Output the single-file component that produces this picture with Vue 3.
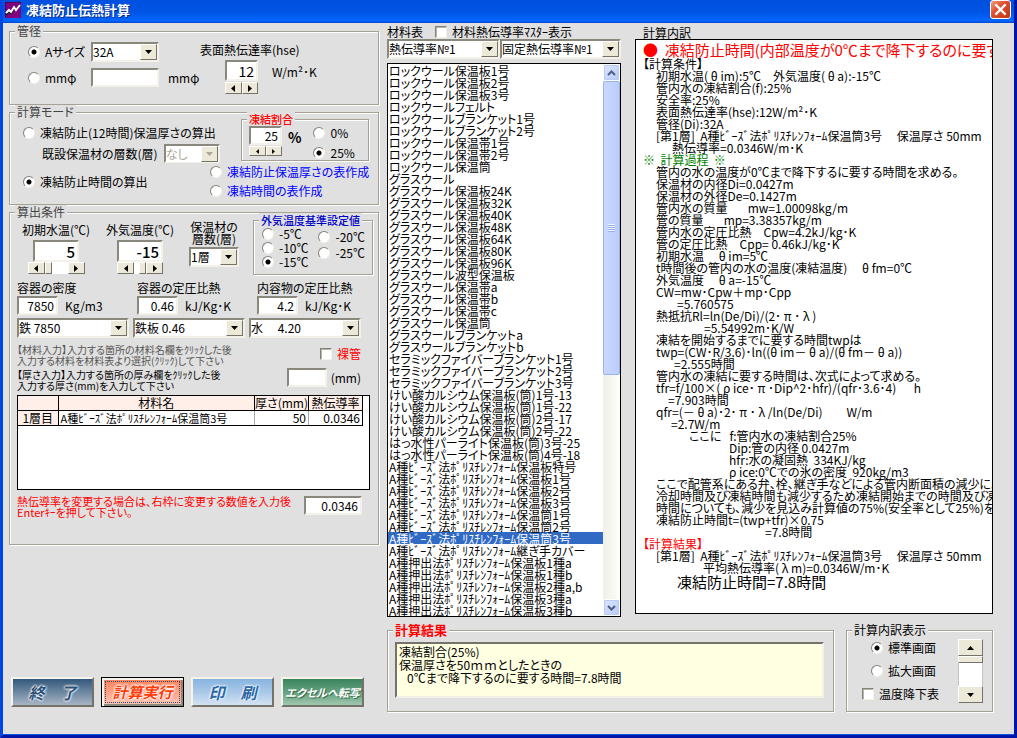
<script setup>
import { ref } from 'vue'

const pipeKind = ref('a')
const pipeSize = ref('32A')
const mmPhi = ref('')
const hse = ref('12')
const mode = ref('time')
const layers = ref('なし')
const freezeValue = ref('25')
const freezeRate = ref('25')
const waterTemp = ref('5')
const airTemp = ref('-15')
const layerCount = ref('1層')
const airBase = ref('-15')
const bare = ref(false)
const thickness = ref('')
const conductivity = ref('0.0346')
const master = ref(false)
const table1 = ref('熱伝導率№1')
const table2 = ref('固定熱伝導率№1')
const view = ref('std')
const dropTable = ref(false)
const resultText = ref('凍結割合(25%)\n保温厚さを50ｍｍとしたときの\n   0℃まで降下するのに要する時間=7.8時間')

const baseLeft = ['-5', '-10', '-15']
const baseRight = ['-20', '-25']

const properties = ref([
  { id: 'density', label: '容器の密度', value: '7850', unit: 'Kg/m3', choice: '鉄 7850', inset: false },
  { id: 'vessel', label: '容器の定圧比熱', value: '0.46', unit: 'kJ/Kg･K', choice: '鉄板 0.46', inset: true },
  { id: 'content', label: '内容物の定圧比熱', value: '4.2', unit: 'kJ/Kg･K', choice: '水　 4.20', inset: true },
])

const beads = 'A種ﾋﾞｰｽﾞ法ﾎﾟﾘｽﾁﾚﾝﾌｫｰﾑ'
const extruded = 'A種押出法ﾎﾟﾘｽﾁﾚﾝﾌｫｰﾑ'
const selected = ref(beads + '保温筒3号')
const materials = [
  'ロックウール保温板1号', 'ロックウール保温板2号', 'ロックウール保温板3号', 'ロックウールフェルト',
  'ロックウールブランケット1号', 'ロックウールブランケット2号', 'ロックウール保温帯1号',
  'ロックウール保温帯2号', 'ロックウール保温筒', 'グラスウール', 'グラスウール保温板24K',
  'グラスウール保温板32K', 'グラスウール保温板40K', 'グラスウール保温板48K', 'グラスウール保温板64K',
  'グラスウール保温板80K', 'グラスウール保温板96K', 'グラスウール波型保温板', 'グラスウール保温帯a',
  'グラスウール保温帯b', 'グラスウール保温帯c', 'グラスウール保温筒', 'グラスウールブランケットa',
  'グラスウールブランケットb', 'セラミックファイバーブランケット1号', 'セラミックファイバーブランケット2号',
  'セラミックファイバーブランケット3号', 'けい酸カルシウム保温板(筒)1号-13', 'けい酸カルシウム保温板(筒)1号-22',
  'けい酸カルシウム保温板(筒)2号-17', 'けい酸カルシウム保温板(筒)2号-22', 'はっ水性パーライト保温板(筒)3号-25',
  'はっ水性パーライト保温板(筒)4号-18',
  beads + '保温板特号', beads + '保温板1号', beads + '保温板2号', beads + '保温板3号',
  beads + '保温筒1号', beads + '保温筒2号', beads + '保温筒3号', beads + '継ぎ手カバー',
  extruded + '保温板1種a', extruded + '保温板1種b', extruded + '保温板2種a,b',
  extruded + '保温板3種a', extruded + '保温板3種b',
]

const layerLine = '[第1層]  A種ﾋﾞｰｽﾞ法ﾎﾟﾘｽﾁﾚﾝﾌｫｰﾑ保温筒3号　 保温厚さ 50mm'
const details = [
  { t: '●  凍結防止時間(内部温度が0℃まで降下するのに要する時間)', i: 0, c: 'big red' },
  { t: '【計算条件】', i: 0 },
  { t: '初期水温( θ im):5℃　外気温度( θ a):-15℃', i: 13 },
  { t: '管内水の凍結割合(f):25%', i: 13 },
  { t: '安全率:25%', i: 13 },
  { t: '表面熱伝達率(hse):12W/m²･K', i: 13 },
  { t: '管径(Di):32A', i: 13 },
  { t: layerLine, i: 13 },
  { t: '熱伝導率=0.0346W/m･K', i: 29 },
  { t: '※  計算過程  ※', i: 0, c: 'green' },
  { t: '管内の水の温度が0℃まで降下するに要する時間を求める。', i: 13 },
  { t: '保温材の内径Di=0.0427m', i: 13 },
  { t: '保温材の外径De=0.1427m', i: 13 },
  { t: '管内水の質量　   mw=1.00098kg/m', i: 13 },
  { t: '管の質量　   mp=3.38357kg/m', i: 13 },
  { t: '管内水の定圧比熱　Cpw=4.2kJ/kg･K', i: 13 },
  { t: '管の定圧比熱　Cpp= 0.46kJ/kg･K', i: 13 },
  { t: '初期水温　 θ im=5℃', i: 13 },
  { t: 't時間後の管内の水の温度(凍結温度)　 θ fm=0℃', i: 13 },
  { t: '外気温度　 θ a=-15℃', i: 13 },
  { t: 'CW=mw･Cpw＋mp･Cpp', i: 13 },
  { t: '=5.760575', i: 34 },
  { t: '熱抵抗Rl=ln(De/Di)/(2･ π ･ λ )', i: 13 },
  { t: '=5.54992m･K/W', i: 61 },
  { t: '凍結を開始するまでに要する時間twpは', i: 13 },
  { t: 'twp=(CW･R/3.6)･ln((θ im－ θ a)/(θ fm－ θ a))', i: 13 },
  { t: '=2.555時間', i: 31 },
  { t: '管内水の凍結に要する時間は、次式によって求める。', i: 13 },
  { t: 'tfr=f/100×( ρ ice･ π ･Dip^2･hfr)/(qfr･3.6･4)　  h', i: 13 },
  { t: '=7.903時間', i: 25 },
  { t: 'qfr=(－ θ a)･2･ π ･ λ /ln(De/Di)　　W/m', i: 13 },
  { t: '=2.7W/m', i: 28 },
  { t: 'ここに   f:管内水の凍結割合25%', i: 46 },
  { t: 'Dip:管の内径 0.0427m', i: 86 },
  { t: 'hfr:水の凝固熱  334KJ/kg', i: 86 },
  { t: 'ρ ice:0℃での氷の密度  920kg/m3', i: 86 },
  { t: 'ここで配管系にある弁、栓、継ぎ手などによる管内断面積の減少により', i: 13 },
  { t: '冷却時間及び凍結時間も減少するため凍結開始までの時間及び凍結', i: 13 },
  { t: '時間についても、減少を見込み計算値の75%(安全率として25%)を', i: 13 },
  { t: '凍結防止時間t=(twp+tfr)×0.75', i: 13 },
  { t: '=7.8時間', i: 122 },
  { t: '【計算結果】', i: 0, c: 'red' },
  { t: layerLine, i: 13 },
  { t: '平均熱伝導率( λ m)=0.0346W/m･K', i: 60 },
  { t: '凍結防止時間=7.8時間', i: 34, c: 'big' },
]
</script>

<template>
  <div class="window">
    <header class="titlebar">
      <svg class="app-icon" viewBox="0 0 16 16" aria-hidden="true">
        <rect width="16" height="16" fill="#800080" />
        <path d="M0 0h16M0 0v16" stroke="#300030" stroke-width="1" />
        <path d="M1 13l3-4 2 2 3-6 2 3 4-5" fill="none" stroke="#111" stroke-width="2" />
        <path d="M1 11l3-3 2 2 3-5 2 3 4-5" fill="none" stroke="#fff" stroke-width="2" />
      </svg>
      <h1>凍結防止伝熱計算</h1>
      <button class="close" type="button" aria-label="閉じる">
        <svg viewBox="0 0 20 20"><path d="M4 4l12 12M16 4L4 16" stroke="#fff" stroke-width="2.6" /></svg>
      </button>
    </header>

    <main class="body">
      <section class="left">
        <fieldset class="group pipe">
          <legend>管径</legend>
          <div class="pipe-grid">
            <label class="opt"><input v-model="pipeKind" type="radio" name="pipe" value="a" />Aサイズ</label>
            <span class="combo">
              <select v-model="pipeSize" aria-label="Aサイズ"><option>32A</option></select>
              <span class="drop"><svg viewBox="0 0 7 4"><path d="M0 0h7L3.500 4z" /></svg></span>
            </span>
            <span></span>
            <label class="opt"><input v-model="pipeKind" type="radio" name="pipe" value="mm" />mmφ</label>
            <input v-model="mmPhi" class="field" type="text" aria-label="mmφ" />
            <span>mmφ</span>
          </div>
          <div class="hse">
            <label for="hse">表面熱伝達率(hse)</label>
            <div class="hse-row">
              <div class="spin">
                <input id="hse" v-model="hse" class="field mid" type="text" />
                <div class="hbar">
                  <button type="button" aria-label="減らす"><svg viewBox="0 0 4 7"><path d="M4 0v7L0 3.500z" /></svg></button>
                  <button type="button" aria-label="増やす"><svg viewBox="0 0 4 7"><path d="M0 0v7L4 3.500z" /></svg></button>
                </div>
              </div>
              <span class="hse-unit">W/m²･K</span>
            </div>
          </div>
        </fieldset>

        <fieldset class="group mode">
          <legend>計算モード</legend>
          <div class="mode-top">
            <div class="mode-left">
              <label class="opt"><input v-model="mode" type="radio" name="mode" value="thick" />凍結防止(12時間)保温厚さの算出</label>
              <div class="existing">
                <label for="layers">既設保温材の層数(層)</label>
                <span class="combo off">
                  <select id="layers" v-model="layers" disabled><option>なし</option></select>
                  <span class="drop"><svg viewBox="0 0 7 4"><path d="M0 0h7L3.500 4z" /></svg></span>
                </span>
              </div>
            </div>
            <fieldset class="group rate">
              <legend>凍結割合</legend>
              <div class="spin">
                <input v-model="freezeValue" class="field" type="text" aria-label="凍結割合" />
                <div class="hbar low">
                  <button type="button" aria-label="減らす"><svg viewBox="0 0 4 7"><path d="M4 0v7L0 3.500z" /></svg></button>
                  <button type="button" aria-label="増やす"><svg viewBox="0 0 4 7"><path d="M0 0v7L4 3.500z" /></svg></button>
                </div>
              </div>
              <b class="percent">%</b>
              <div class="rate-opts">
                <label class="opt"><input v-model="freezeRate" type="radio" name="rate" value="0" />0%</label>
                <label class="opt"><input v-model="freezeRate" type="radio" name="rate" value="25" />25%</label>
              </div>
            </fieldset>
          </div>
          <div class="mode-bottom">
            <label class="opt"><input v-model="mode" type="radio" name="mode" value="time" />凍結防止時間の算出</label>
            <div class="blue-opts">
              <label class="opt"><input v-model="mode" type="radio" name="mode" value="t1" />凍結防止保温厚さの表作成</label>
              <label class="opt"><input v-model="mode" type="radio" name="mode" value="t2" />凍結時間の表作成</label>
            </div>
          </div>
        </fieldset>

        <fieldset class="group cond">
          <legend>算出条件</legend>
          <div class="temps">
            <div class="temp">
              <label for="water">初期水温(℃)</label>
              <input id="water" v-model="waterTemp" class="field large" type="text" />
              <div class="hbar wide">
                <button type="button" aria-label="下げる"><svg viewBox="0 0 4 7"><path d="M4 0v7L0 3.500z" /></svg></button>
                <span class="thumb"></span><span class="track"></span>
                <button type="button" aria-label="上げる"><svg viewBox="0 0 4 7"><path d="M0 0v7L4 3.500z" /></svg></button>
              </div>
            </div>
            <div class="temp">
              <label for="air">外気温度(℃)</label>
              <input id="air" v-model="airTemp" class="field large" type="text" />
              <div class="hbar">
                <button type="button" aria-label="下げる"><svg viewBox="0 0 4 7"><path d="M4 0v7L0 3.500z" /></svg></button>
                <span class="track"></span><span class="thumb"></span>
                <button type="button" aria-label="上げる"><svg viewBox="0 0 4 7"><path d="M0 0v7L4 3.500z" /></svg></button>
              </div>
            </div>
            <div class="count">
              <label for="count">保温材の<br />層数(層)</label>
              <span class="combo">
                <select id="count" v-model="layerCount"><option>1層</option></select>
                <span class="drop"><svg viewBox="0 0 7 4"><path d="M0 0h7L3.500 4z" /></svg></span>
              </span>
            </div>
            <fieldset class="group base">
              <legend>外気温度基準設定値</legend>
              <div class="base-col">
                <label v-for="b in baseLeft" :key="b" class="opt"><input v-model="airBase" type="radio" name="base" :value="b" />{{ b }}℃</label>
              </div>
              <div class="base-col">
                <label v-for="b in baseRight" :key="b" class="opt"><input v-model="airBase" type="radio" name="base" :value="b" />{{ b }}℃</label>
              </div>
            </fieldset>
          </div>

          <div class="props">
            <div v-for="p in properties" :key="p.id" class="prop">
              <div :class="{ inset: p.inset }">
                <label :for="p.id">{{ p.label }}</label>
                <div class="prop-row">
                  <input :id="p.id" v-model="p.value" class="field" type="text" />
                  <span>{{ p.unit }}</span>
                </div>
              </div>
              <span class="combo">
                <select v-model="p.choice" :aria-label="p.label"><option :value="p.choice">{{ p.choice }}</option></select>
                <span class="drop"><svg viewBox="0 0 7 4"><path d="M0 0h7L3.500 4z" /></svg></span>
              </span>
            </div>
          </div>

          <div class="notes">
            <div>
              <p class="dim">【材料入力】入力する箇所の材料名欄をｸﾘｯｸした後<br />入力する材料を材料表より選択(ｸﾘｯｸ)して下さい</p>
              <p>【厚さ入力】入力する箇所の厚み欄をｸﾘｯｸした後<br />入力する厚さ(mm)を入力して下さい</p>
            </div>
            <div class="notes-right">
              <label class="opt bare"><input v-model="bare" type="checkbox" />裸管</label>
              <label class="mm"><input v-model="thickness" class="field" type="text" />(mm)</label>
            </div>
          </div>

          <div class="sheet">
            <table>
              <colgroup><col class="c1" /><col /><col class="c3" /><col class="c3" /></colgroup>
              <thead>
                <tr><th></th><th>材料名</th><th>厚さ(mm)</th><th>熱伝導率</th></tr>
              </thead>
              <tbody>
                <tr><th>1層目</th><td>A種ﾋﾞｰｽﾞ法ﾎﾟﾘｽﾁﾚﾝﾌｫｰﾑ保温筒3号</td><td>50</td><td>0.0346</td></tr>
              </tbody>
            </table>
          </div>

          <div class="change">
            <label for="cond">熱伝導率を変更する場合は、右枠に変更する数値を入力後<br />Enterｷｰを押して下さい。</label>
            <input id="cond" v-model="conductivity" class="field" type="text" />
          </div>
        </fieldset>

        <div class="actions">
          <button class="act quit" type="button">終　了</button>
          <button class="act run" type="button"><span>計算実行</span></button>
          <button class="act print" type="button">印　刷</button>
          <button class="act excel" type="button">エクセルへ転写</button>
        </div>
      </section>

      <section class="right">
        <div class="panes">
          <div class="list-pane">
            <div class="list-head">
              <span>材料表</span>
              <label class="opt"><input v-model="master" type="checkbox" />材料熱伝導率ﾏｽﾀｰ表示</label>
            </div>
            <div class="list-combos">
              <span class="combo">
                <select v-model="table1" aria-label="熱伝導率"><option>熱伝導率№1</option></select>
                <span class="drop"><svg viewBox="0 0 7 4"><path d="M0 0h7L3.500 4z" /></svg></span>
              </span>
              <span class="combo">
                <select v-model="table2" aria-label="固定熱伝導率"><option>固定熱伝導率№1</option></select>
                <span class="drop"><svg viewBox="0 0 7 4"><path d="M0 0h7L3.500 4z" /></svg></span>
              </span>
            </div>
            <div class="listbox">
              <select v-model="selected" size="46" aria-label="材料表">
                <option v-for="m in materials" :key="m" :value="m">{{ m }}</option>
              </select>
              <div class="vbar">
                <button type="button" aria-label="上へ"><svg viewBox="0 0 9 6"><path d="M1 5l3.500-3.500L8 5" /></svg></button>
                <div class="vthumb"><i></i></div>
                <div class="vtrack"></div>
                <button type="button" aria-label="下へ"><svg viewBox="0 0 9 6"><path d="M1 1l3.500 3.500L8 1" /></svg></button>
              </div>
            </div>
          </div>

          <div class="detail-pane">
            <h2>計算内訳</h2>
            <div class="details">
              <p v-for="(d, n) in details" :key="n" :class="d.c" :style="{ paddingLeft: d.i + 'px' }">{{ d.t }}</p>
            </div>
          </div>
        </div>

        <div class="bottom">
          <fieldset class="group result">
            <legend>計算結果</legend>
            <textarea v-model="resultText" aria-label="計算結果" rows="4"></textarea>
          </fieldset>
          <fieldset class="group view">
            <legend>計算内訳表示</legend>
            <div class="view-opts">
              <label class="opt"><input v-model="view" type="radio" name="view" value="std" />標準画面</label>
              <label class="opt"><input v-model="view" type="radio" name="view" value="big" />拡大画面</label>
              <label class="opt check"><input v-model="dropTable" type="checkbox" />温度降下表</label>
            </div>
            <div class="classic-bar">
              <button type="button" aria-label="上へ"><svg viewBox="0 0 7 4"><path d="M0 4h7L3.500 0z" /></svg></button>
              <span class="cthumb"></span>
              <span class="ctrack"></span>
              <button type="button" aria-label="下へ"><svg viewBox="0 0 7 4"><path d="M0 0h7L3.500 4z" /></svg></button>
            </div>
          </fieldset>
        </div>
      </section>
    </main>
  </div>
</template>

<style>
body {
  margin: 0;
  background: #e0e0e0;
}
</style>

<style scoped>
.window, .window * { box-sizing: border-box; }
.window {
  display: flex;
  flex-direction: column;
  min-height: 100vh;
  background: #e0e0e0;
  border: solid #0831d9;
  border-width: 0 3px 3px;
  border-color: #0831d9 #0016a8 #0016a8 #0046e0;
  box-shadow: inset 0 -1px #0855dd;
  color: #000;
  font: 12px/14px "Noto Sans CJK JP", sans-serif;
  font-feature-settings: "palt";
  white-space: nowrap;
}
.window button, .window input, .window select, .window textarea {
  font: inherit;
  font-feature-settings: inherit;
  color: inherit;
  margin: 0;
  padding: 0;
  border-radius: 0;
}
p, h1, h2 { margin: 0; font: inherit; }

.titlebar {
  display: flex;
  align-items: center;
  gap: 5px;
  height: 23px;
  padding: 0 3px 4px 2px;
  background: linear-gradient(#0050e0, #0054e3 50%, #0066ff 90%, #0048cc);
}
.app-icon { width: 16px; height: 16px; }
.titlebar h1 {
  flex: 1;
  color: #fff;
  font-weight: 700;
  font-size: 13px;
  line-height: 18px;
  text-shadow: 1px 1px #00298c;
}
.window .close {
  width: 21px;
  height: 19px;
  border: 1px solid #fff;
  border-radius: 3px;
  background: linear-gradient(135deg, #f0a080, #e05030 40%, #c03510);
}
.close svg { display: block; width: 19px; height: 17px; }

.body {
  flex: 1;
  display: grid;
  grid-template-columns: minmax(0, 370fr) minmax(0, 606fr);
  gap: 8px;
  padding: 1px 21px 8px 6px;
}
.left { display: flex; flex-direction: column; }

.group {
  --inset: 0px;
  min-width: 0;
  margin: 0;
  padding: 0 0 0 var(--inset);
  border: 1px solid #a5a295;
  box-shadow: 1px 1px #fff, inset 1px 1px #fff;
}
.group > legend {
  margin-left: calc(5px - var(--inset));
  padding: 0 2px;
  background: #e0e0e0;
  color: #444;
  line-height: 14px;
}

.opt { display: flex; align-items: center; gap: 5px; }
.window .opt input { appearance: none; flex: none; width: 12px; height: 12px; background: #fff; }
.window .opt input[type="radio"] {
  border: 1px solid;
  border-color: #85827a #f4f2e8 #f4f2e8 #85827a;
  border-radius: 50%;
}
.window .opt input[type="radio"]:checked { background: radial-gradient(circle, #000 0 2px, #fff 3px); }
.window .opt input[type="checkbox"] {
  border: 1px solid;
  border-color: #85827a #f4f2e8 #f4f2e8 #85827a;
  box-shadow: inset 1px 1px #b5b2a6;
}

.window .field {
  width: 100%;
  height: 19px;
  padding: 0 2px;
  background: #fff;
  border: 2px solid;
  border-color: #8a877c #f4f2e8 #f4f2e8 #8a877c;
  text-align: right;
}

.combo { display: grid; height: 20px; background: #fff; border: 2px solid; border-color: #8a877c #f4f2e8 #f4f2e8 #8a877c; }
.combo select {
  grid-area: 1 / 1;
  appearance: none;
  width: 100%;
  min-width: 0;
  border: 0;
  background: #fff;
  line-height: 16px;
  white-space: pre;
}
.drop {
  grid-area: 1 / 1;
  justify-self: end;
  width: 17px;
  display: grid;
  place-items: center;
  pointer-events: none;
  background: #ece9d8;
  border: 1px solid;
  border-color: #fff #75726a #75726a #fff;
}
.drop svg { width: 7px; height: 4px; }
.window .off select { color: #aca899; opacity: 1; }
.off svg { fill: #aca899; }

.hbar { display: flex; height: 12px; background: #fff; }
.hbar button, .thumb, .classic-bar button, .cthumb {
  display: grid;
  place-items: center;
  background: #ece9d8;
  border: 1px solid;
  border-color: #fff #75726a #75726a #fff;
}
.hbar button { flex: 1; min-width: 0; }
.hbar svg { width: 4px; height: 7px; }
.low { height: 10px; }
.low svg { width: 3px; height: 5px; }
.thumb { width: 7px; }
.track { width: 5px; }
.wide .track { width: 16px; }

.pipe {
  --inset: 18px;
  min-height: 81px;
  display: grid;
  grid-template-columns: 172px 1fr;
  padding-top: 4px;
  padding-bottom: 8px;
}
.pipe-grid {
  display: grid;
  grid-template-columns: 63px 68px auto;
  row-gap: 6px;
  align-content: start;
  align-items: center;
}
.pipe-grid > span:last-child { padding-left: 9px; }
.hse > label { display: block; padding-top: 1px; }
.hse-row { display: flex; gap: 14px; padding: 3px 0 0 25px; }
.spin { width: 33px; display: flex; flex-direction: column; gap: 1px; }
.window .mid { height: 21px; font-size: 14px; }
.hse-unit { padding-top: 5px; }

.mode { --inset: 13px; padding-right: 9px; padding-bottom: 6px; }
.mode-top { display: flex; justify-content: space-between; }
.mode-left { padding-top: 7px; }
.existing { display: flex; align-items: center; gap: 6px; padding: 4px 0 0 19px; }
.existing .combo { width: 56px; height: 19px; }
.rate { --inset: 7px; width: 128px; height: 49px; display: flex; gap: 6px; padding-bottom: 3px; margin-top: -7px; }
.rate > legend { font-size: 11px; color: #f00; font-weight: 500; }
.percent { font-size: 14px; padding-top: 4px; }
.rate-opts { display: grid; gap: 6px; padding-left: 6px; align-content: start; }
.mode-bottom { display: grid; grid-template-columns: 187px 1fr; align-items: center; padding-top: 2px; }
.blue-opts { display: grid; gap: 5px; color: #00f; }

.cond { --inset: 7px; padding-right: 5px; padding-bottom: 26px; }
.temps { display: flex; gap: 14px; align-items: flex-start; padding-left: 4px; }
.temp { display: flex; flex-direction: column; align-items: center; padding-top: 4px; width: 70px; }
.temp label { padding-bottom: 3px; }
.window .large { width: 46px; height: 22px; font-size: 15px; font-weight: 500; }
.temp .hbar { width: 46px; }
.temp .wide { width: 57px; }
.count { width: 50px; line-height: 12px; padding-top: 2px; display: grid; gap: 2px; }
.count label { text-align: center; }
.base { --inset: 8px; flex: 1; height: 62px; display: flex; gap: 10px; margin-top: -6px; }
.base > legend { color: #0000c8; font-weight: 500; font-size: 11px; }
.base-col { display: grid; align-content: start; }
.base-col:last-child { gap: 2px; padding-top: 3px; }

.props { display: grid; grid-template-columns: repeat(3, 112px); gap: 4px; padding-top: 6px; }
.prop { display: grid; gap: 3px; }
.inset { padding-left: 4px; }
.prop:last-child .inset { padding-left: 8px; }
.prop-row { display: flex; align-items: center; gap: 7px; padding-top: 1px; }
.window .prop-row .field { width: 41px; }

.notes { display: flex; justify-content: space-between; padding: 6px 12px 0 0; font-size: 10px; line-height: 11px; }
.dim { color: #555; padding-bottom: 3px; }
.notes-right { display: grid; gap: 7px; align-content: start; padding-top: 3px; font-size: 12px; line-height: 14px; }
.bare { color: #f00; justify-self: end; }
.mm { display: flex; align-items: center; gap: 4px; }
.window .mm .field { width: 40px; }

.sheet { height: 95px; margin-top: 4px; margin-right: 3px; background: #fff; border: 1px solid #000; }
.sheet table { width: calc(100% - 6px); table-layout: fixed; border-collapse: collapse; }
.c1 { width: 40px; }
.c3 { width: 54px; }
.sheet th, .sheet td { height: 14px; padding: 0 2px; line-height: 14px; font-weight: 400; border: 1px solid #000; border-top: 0; text-align: right; }
.sheet th { padding: 0; background: #ffefe8; text-align: center; }
.sheet td { border-right-color: #a8a8b0; }
.sheet td:nth-child(2) { text-align: left; font-size: 11px; }
.sheet td:last-child { border-right-color: #000; }
.sheet tr > :first-child { border-left: 0; }

.change { display: flex; justify-content: space-between; padding: 6px 11px 0 0; color: #f00; font-size: 11px; line-height: 11px; }
.window .change .field { width: 58px; color: #000; font-size: 12px; }

.actions { display: flex; gap: 7px; margin-top: auto; padding: 0 0 20px 2px; }
.window .act {
  width: 83px;
  height: 30px;
  border: 2px solid;
  border-color: #f6f4ea #75726a #75726a #f6f4ea;
  font-size: 16px;
  font-weight: 700;
  font-style: italic;
  line-height: 22px;
  white-space: nowrap;
}
.window .quit { background: linear-gradient(#33587c, #7890a8 60%, #a8b4c4); color: #2c5078; text-shadow: 0 0 2px #fff, 0 0 2px #fff, 0 0 3px #fff; }
.window .run { background: linear-gradient(#ff8058, #ffa890 60%, #ffc8b8); color: #ff3c08; border: 1px solid #000; text-shadow: 0 0 2px #fff, 0 0 2px #fff, 0 0 3px #fff, 0 0 3px #fff; box-shadow: inset 2px 2px #f6f4ea, inset -2px -2px #8a877c; }
.run span { display: block; margin: 3px; border: 1px dotted #1c5070; font-size: 15px; line-height: 20px; }
.window .print { background: linear-gradient(#88b4e0, #a8c8e8 50%, #d4e2f2); color: #2868a8; text-shadow: 0 0 2px #fff, 0 0 2px #fff, 0 0 3px #fff; }
.window .excel { background: linear-gradient(#38845c, #70a888 60%, #a0c8b0); color: #fff; font-size: 11px; text-shadow: 1px 1px 1px #306848; }

.right { display: flex; flex-direction: column; gap: 6px; }
.panes { display: grid; grid-template-columns: minmax(0, 234fr) minmax(0, 358fr); gap: 14px; }
.list-head { display: flex; gap: 12px; height: 15px; align-items: center; }
.list-combos { display: grid; grid-template-columns: 113fr 121fr; }
.listbox { display: flex; margin-top: 4px; background: #fff; border: 1px solid #000; }
.listbox select {
  flex: 1;
  min-width: 0;
  border: 0;
  outline: 0;
  background: #fff;
  overflow: hidden;
  scrollbar-width: none;
  line-height: 12px;
}
.listbox option {
  display: flex;
  align-items: center;
  min-height: 0;
  height: 12px;
  padding: 0 0 0 1px;
  overflow: visible;
  line-height: 12px;
  color: #000;
}
.listbox option:checked { background: #316ac5 linear-gradient(#316ac5, #316ac5); color: #fff !important; }
.vbar { width: 17px; display: flex; flex-direction: column; background: linear-gradient(90deg, #f0eee6, #fefefb); }
.vbar button { height: 17px; display: grid; place-items: center; border: 1px solid #fff; background: linear-gradient(135deg, #dde7ff, #b5c9f7); box-shadow: inset 0 0 0 1px #b8cbf6; }
.window .vbar button { border-radius: 2px; }
.vbar svg { width: 9px; height: 6px; fill: none; stroke: #4d6185; stroke-width: 2; }
.vthumb { flex: 293; display: grid; place-items: center; border: 1px solid #98b4ec; border-radius: 2px; background: linear-gradient(90deg, #cad8fe, #bacdfb); }
.vthumb i { width: 7px; height: 8px; background: repeating-linear-gradient(#eef4fe 0 1px, #98b0e8 1px 2px); }
.vtrack { flex: 225; }

.detail-pane { display: flex; flex-direction: column; padding-bottom: 3px; }
.detail-pane h2 { height: 15px; padding: 2px 0 0 8px; line-height: 14px; }
.details { flex: 1; overflow: hidden; padding: 2px 0 0 7px; background: #fff; border: 1px solid #000; }
.details p { line-height: 12px; white-space: pre; }
.details .big { font-size: 15px; line-height: 16px; }
.details .red { color: #f00; }
.details .green { color: #008000; }

.bottom { display: grid; grid-template-columns: minmax(0, 1fr) 147px; gap: 12px; }
.result { --inset: 7px; padding-top: 5px; padding-right: 9px; padding-bottom: 12px; }
.result > legend { color: #f00; font-weight: 700; font-size: 13px; }
.window .result textarea {
  display: block;
  width: 100%;
  height: 56px;
  resize: none;
  padding: 1px 2px;
  background: #ffffe1;
  border: 2px solid;
  border-color: #75726a #f4f2e8 #f4f2e8 #75726a;
  line-height: 13px;
  overflow: hidden;
}
.view { --inset: 15px; display: flex; justify-content: space-between; padding-top: 2px; padding-right: 9px; padding-bottom: 8px; }
.view > legend { color: #000; }
.view-opts { display: grid; gap: 9px; align-content: start; padding: 2px 0 0 9px; }
.check { margin-left: -9px; }
.classic-bar { width: 25px; display: flex; flex-direction: column; background: #fff; height: 64px; }
.classic-bar button { height: 17px; }
.cthumb { height: 7px; }
.ctrack { flex: 1; border: solid #c8c5b8; border-width: 0 1px; }
.classic-bar svg { width: 7px; height: 4px; }
</style>
